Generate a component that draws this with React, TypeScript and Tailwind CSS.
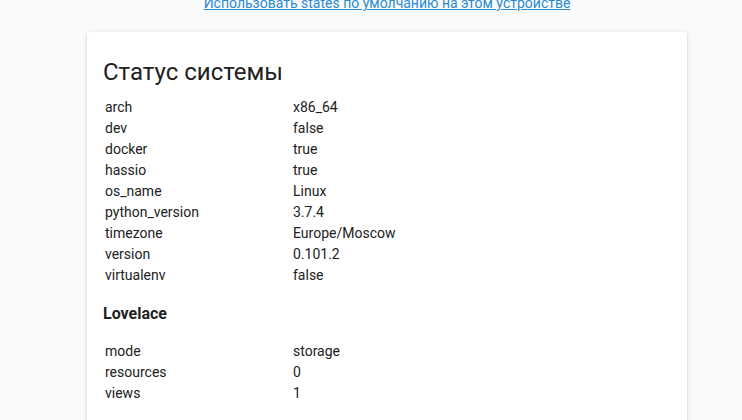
const system: [string, string][] = [
  ["arch", "x86_64"],
  ["dev", "false"],
  ["docker", "true"],
  ["hassio", "true"],
  ["os_name", "Linux"],
  ["python_version", "3.7.4"],
  ["timezone", "Europe/Moscow"],
  ["version", "0.101.2"],
  ["virtualenv", "false"],
];

const lovelace: [string, string][] = [
  ["mode", "storage"],
  ["resources", "0"],
  ["views", "1"],
];

function InfoTable({ rows }: { rows: [string, string][] }) {
  return (
    <table className="border-separate border-spacing-0 text-[14px] text-[#212121]">
      <tbody>
        {rows.map(([k, v]) => (
          <tr key={k} className="h-[21px]">
            <td className="w-[188px] px-[2px] py-0 align-middle">{k}</td>
            <td className="px-[2px] py-0 align-middle">{v}</td>
          </tr>
        ))}
      </tbody>
    </table>
  );
}

export default function App() {
  return (
    <div
      className="h-[420px] w-[742px] overflow-hidden bg-[#fafafa]"
      style={{ fontFamily: "Roboto, 'Noto Sans', sans-serif" }}
    >
      <div className="ml-[87px] w-[600px]">
        <div className="-mt-[7px] flex h-[39px] items-start justify-center">
          <a href="#" className="text-[14px] leading-[20px] text-[#2a8ad4] underline">
            Использовать states по умолчанию на этом устройстве
          </a>
        </div>
        <div className="rounded-[2px] bg-white px-4 pt-[24px] pb-[40px] shadow-[0_2px_2px_0_rgba(0,0,0,0.14),0_1px_5px_0_rgba(0,0,0,0.12),0_3px_1px_-2px_rgba(0,0,0,0.2)]">
          <h1 className="mb-[9px] text-[24px] leading-[32px] font-normal text-[#212121]">Статус системы</h1>
          <InfoTable rows={system} />
          <h3 className="mt-[16px] mb-[15px] text-[16px] leading-[24px] font-bold text-[#212121]">Lovelace</h3>
          <InfoTable rows={lovelace} />
        </div>
      </div>
    </div>
  );
}
